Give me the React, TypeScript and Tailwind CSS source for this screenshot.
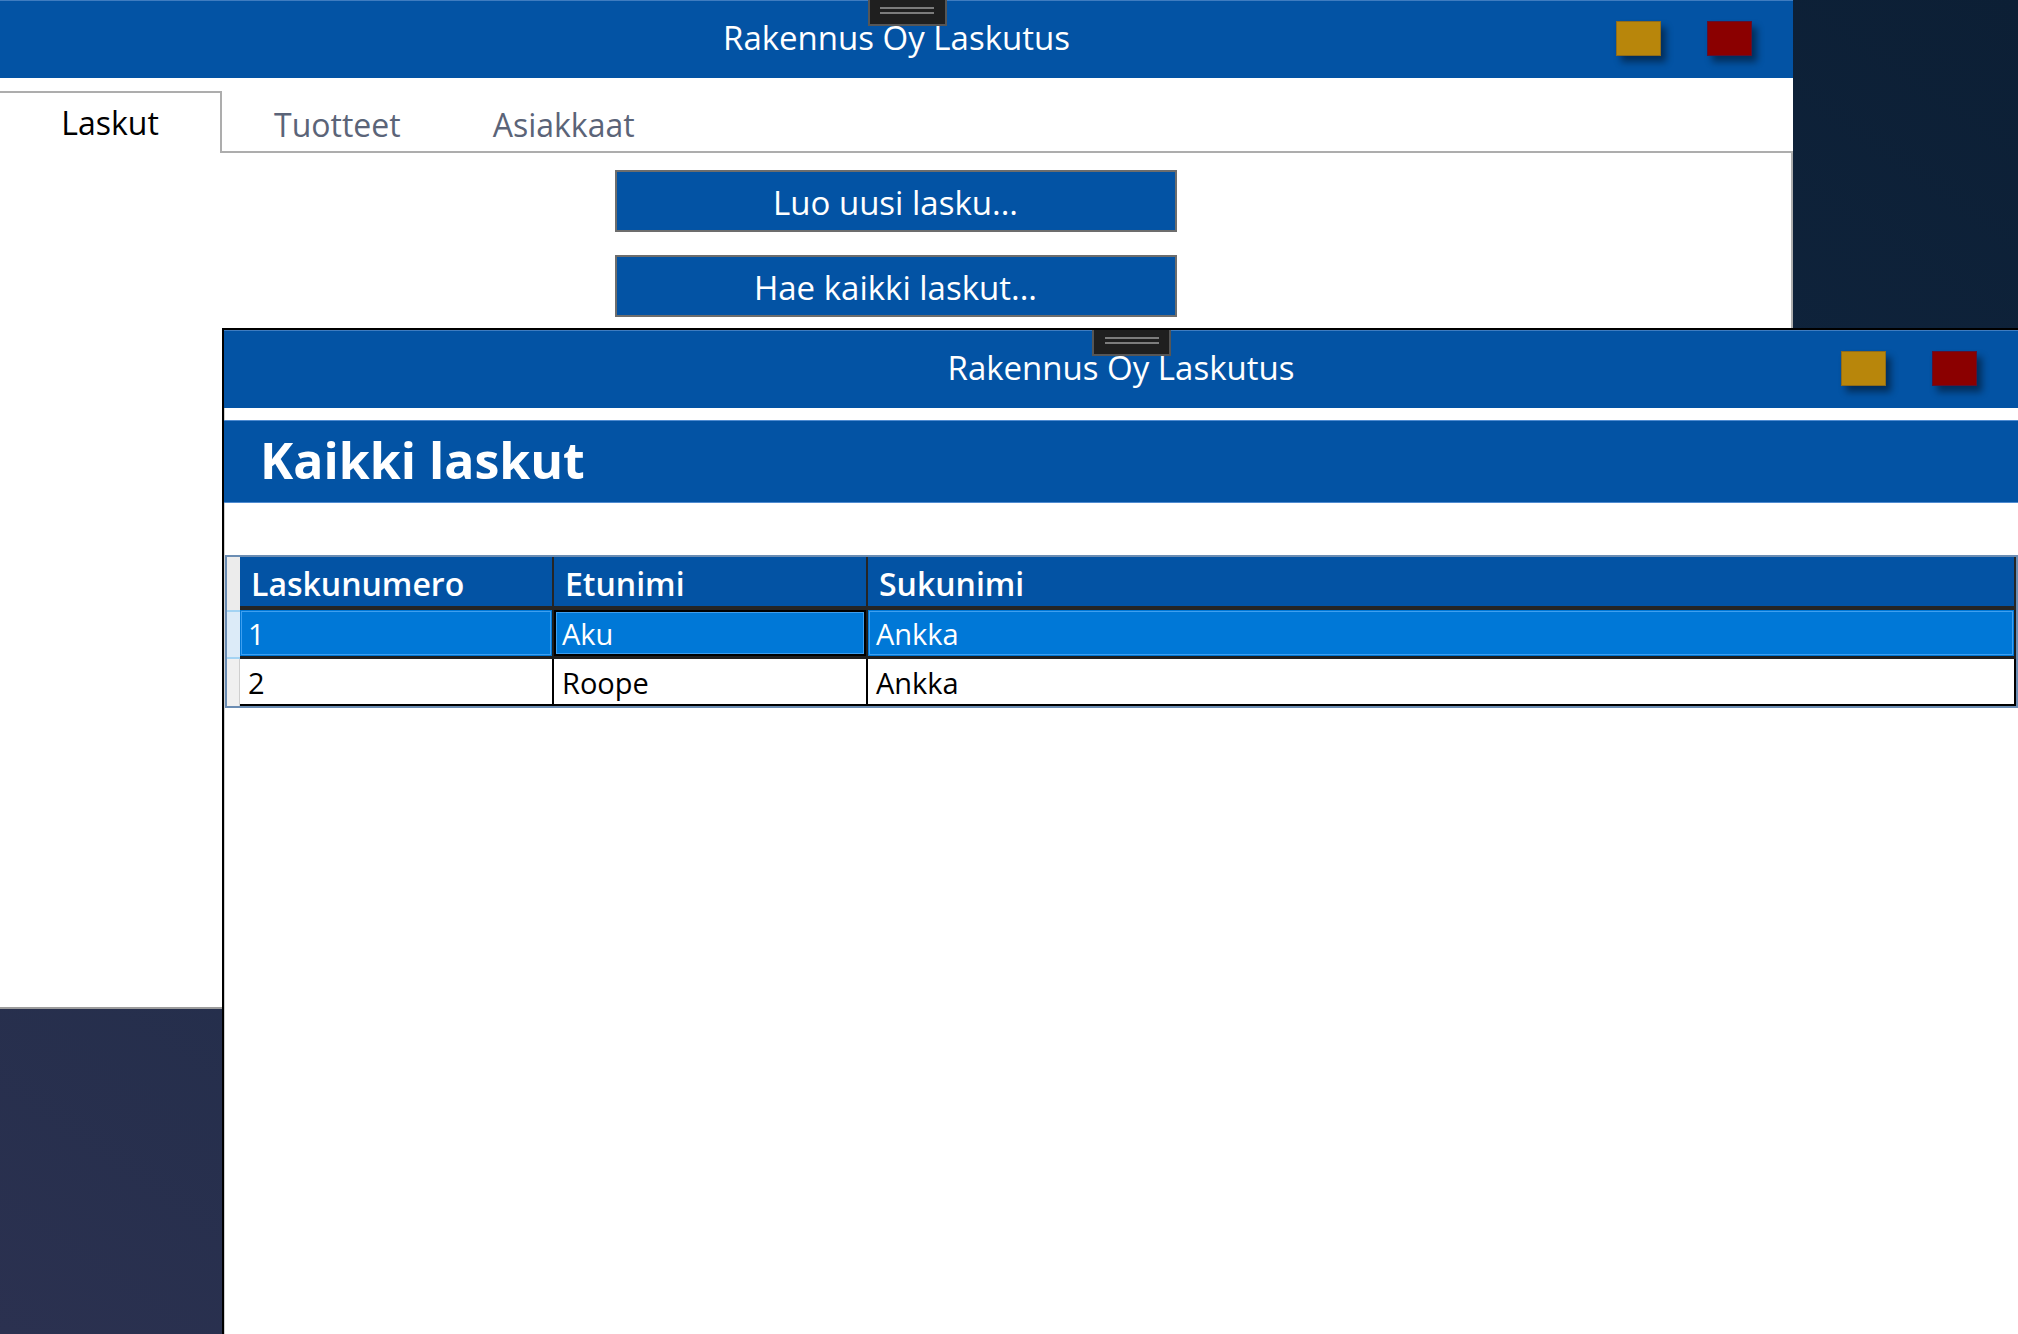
import React from 'react';

const sans = "font-['Open_Sans','Noto_Sans',sans-serif]";

const Grip: React.FC = () => (
  <div className="absolute left-[calc(50%-29px)] top-[-1px] flex h-[26px] w-[79px] flex-col items-center gap-[3px] border-2 border-t-0 border-[#565656] bg-[#1f1f1f] pt-[7px]">
    <div className="h-[2px] w-[54px] bg-[#7c7c7c]" />
    <div className="h-[2px] w-[54px] bg-[#7c7c7c]" />
  </div>
);

const TitleBar: React.FC = () => (
  <div className="relative grid h-[78px] shrink-0 grid-cols-[1fr_auto_1fr] items-center border-t border-[#3f7cc0] bg-[#0353a4]">
    <div />
    <span className="pb-[5px] text-[33px] leading-none text-white">Rakennus Oy Laskutus</span>
    <div className="flex items-center justify-end gap-[46px] pr-[41px] pb-[2px]">
      <div className="h-[35px] w-[45px] border border-[#8f6c1c] bg-[#b8860b] shadow-[5px_6px_7px_rgba(0,0,0,0.45)]" />
      <div className="h-[35px] w-[45px] border border-[#5e1030] bg-[#8b0000] shadow-[5px_6px_7px_rgba(0,0,0,0.45)]" />
    </div>
    <Grip />
  </div>
);

const rows = [
  { num: '1', first: 'Aku', last: 'Ankka', selected: true },
  { num: '2', first: 'Roope', last: 'Ankka', selected: false },
];

const App: React.FC = () => {
  return (
    <div
      className={`relative h-[1334px] w-[2018px] overflow-hidden bg-[linear-gradient(215deg,#0c1f35_0%,#112640_35%,#1f2c48_65%,#2b3150_100%)] ${sans}`}
    >
      {/* back window */}
      <div className="absolute left-0 top-0 flex h-[1009px] w-[1793px] flex-col border-b-2 border-[#9c9c9c] bg-white">
        <TitleBar />
        <div className="flex h-[75px] shrink-0 items-end">
          <div className="flex h-[62px] w-[222px] items-center justify-center border-t-2 border-r-2 border-[#adadad] text-[32px] text-black">
            Laskut
          </div>
          <div className="flex h-full flex-1 items-end border-b-2 border-[#adadad]">
            <div className="flex h-[60px] items-center pl-[52px] pr-[54px] pt-[8px] text-[32px] text-[#5b6478]">Tuotteet</div>
            <div className="flex h-[60px] items-center px-[38px] pt-[8px] text-[32px] text-[#5b6478]">Asiakkaat</div>
          </div>
        </div>
        <div className="flex flex-1 flex-col items-center gap-[23px] border-r-2 border-[#adadad] pt-[17px]">
          {['Luo uusi lasku...', 'Hae kaikki laskut...'].map((label) => (
            <button
              key={label}
              className="flex h-[62px] w-[562px] items-center justify-center border-2 border-[#6d6d6d] bg-[#0353a4] pt-[4px] text-[33px] text-white"
            >
              {label}
            </button>
          ))}
        </div>
      </div>

      {/* front window */}
      <div className="absolute left-[222px] top-[328px] right-0 bottom-0 flex flex-col border-l-2 border-t-2 border-black bg-white shadow-[inset_1px_0_0_#cfcfcf]">
        <TitleBar />
        <div className="mt-[12px] flex h-[83px] shrink-0 items-center border-y border-[#4f8bd0] bg-[#0353a4] pl-[36px]">
          <h1 className="pb-[4px] text-[50px] font-bold leading-none text-white">Kaikki laskut</h1>
        </div>

        <div className="mt-[52px] ml-[1px] border-2 border-[#6b8db3]">
          <div className="grid grid-cols-[13px_314px_314px_1fr]">
            {/* header */}
            <div className="h-[53px] bg-[#ececec]" />
            {['Laskunumero', 'Etunimi', 'Sukunimi'].map((h) => (
              <div
                key={h}
                className="flex h-[53px] items-center border-r-2 border-b-4 border-[#252525] bg-[#0353a4] pt-[4px] pl-[11px] text-[32px] font-semibold text-white"
              >
                {h}
              </div>
            ))}

            {rows.map((r) =>
              r.selected ? (
                <React.Fragment key={r.num}>
                  <div className="h-[49px] border-y-2 border-[#a3d3f3] bg-[#dcebf8]" />
                  <div className="flex h-[49px] items-center border-r-2 border-b-[3px] border-[#1e1e1e] bg-[#0078d7] pt-[2px] pl-[8px] text-[29px] text-white shadow-[inset_0_0_0_1px_#0078d7,inset_0_0_0_2px_#3d9ff0]">
                    {r.num}
                  </div>
                  <div className="flex h-[49px] items-center border-r-2 border-b-[3px] border-[#1e1e1e] bg-[#0078d7] pt-[2px] pl-[8px] text-[29px] text-white shadow-[inset_0_0_0_2px_#000,inset_0_0_0_3px_#3d9ff0]">
                    {r.first}
                  </div>
                  <div className="flex h-[49px] items-center border-r-2 border-b-[3px] border-[#1e1e1e] bg-[#0078d7] pt-[2px] pl-[8px] text-[29px] text-white shadow-[inset_0_0_0_1px_#0078d7,inset_0_0_0_2px_#3d9ff0]">
                    {r.last}
                  </div>
                </React.Fragment>
              ) : (
                <React.Fragment key={r.num}>
                  <div className="h-[47px] border-r border-[#cfcfcf] bg-[#f0f0f0]" />
                  <div className="flex h-[47px] items-center border-r-2 border-b-2 border-black pt-[2px] pl-[8px] text-[29px] text-black">
                    {r.num}
                  </div>
                  <div className="flex h-[47px] items-center border-r-2 border-b-2 border-black pt-[2px] pl-[8px] text-[29px] text-black">
                    {r.first}
                  </div>
                  <div className="flex h-[47px] items-center border-r-2 border-b-2 border-black pt-[2px] pl-[8px] text-[29px] text-black">
                    {r.last}
                  </div>
                </React.Fragment>
              )
            )}
          </div>
        </div>
      </div>
    </div>
  );
};

export default App;
